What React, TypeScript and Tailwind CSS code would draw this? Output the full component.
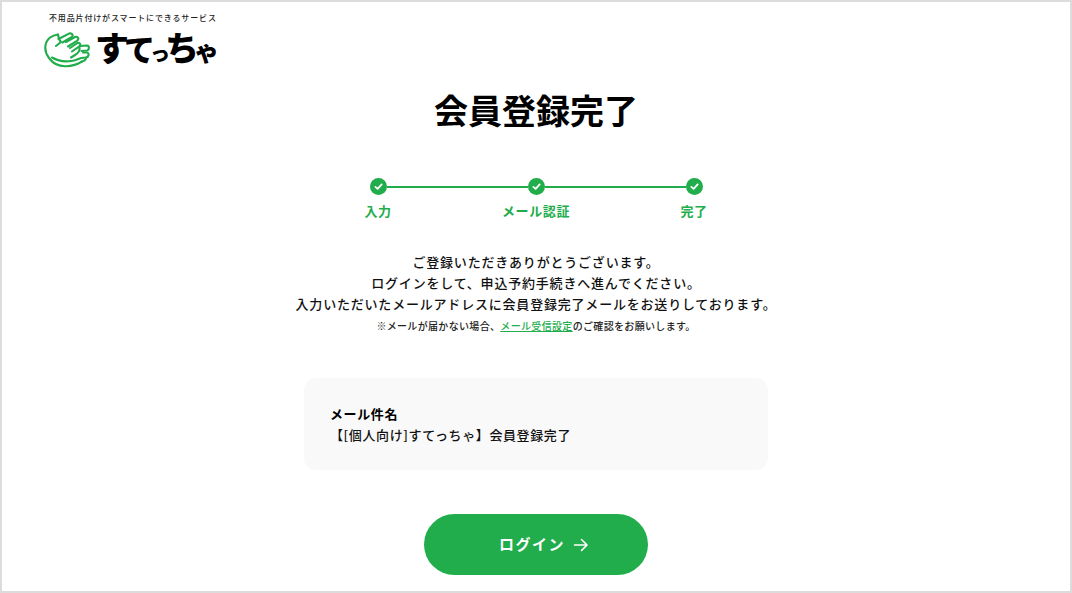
import React from "react";

const font = { fontFamily: '"Noto Sans CJK JP", "Noto Sans", sans-serif' };

function Check() {
  return (
    <span className="w-[17px] h-[17px] rounded-full bg-[#21ad4b] flex items-center justify-center shrink-0">
      <svg width="9" height="9" viewBox="0 0 10 10" fill="none" stroke="#fff" strokeWidth="2" strokeLinecap="round" strokeLinejoin="round">
        <path d="M1.5 5.4 L4 7.6 L8.5 2.6" />
      </svg>
    </span>
  );
}

function Hand() {
  return (
    <svg width="46" height="36" viewBox="0 0 46 36" fill="none" stroke="#21ad4b" strokeWidth="2.1" strokeLinecap="round" strokeLinejoin="round" className="shrink-0">
      <path d="M14 2.5 C8 3.5 3.5 6.5 2 11 C0.5 16 2 22 5 26 C9 31.5 15 34.5 22 34.2 C28 34 34 32 38 29.5" />
      <path d="M14 2.5 C14.5 5.5 15 8 17 10 L12 14" />
      <path d="M14.5 7 L25 1.6 C28 0.6 30 3.5 27.5 5.2 L18.5 10.5" />
      <path d="M22 10 L31 5 C34 4 35.5 7 33 8.8 L24 14.5" />
      <path d="M26 16 L33.5 11 C36 10 37.5 13 35 14.6 L28 19.5" />
      <path d="M36 14 L43 13.5 C45.5 13.5 45.5 18 43 18.5 L37.5 19" />
      <path d="M35.5 15.5 C36 18.5 34.5 21 31 23 L27 25.5" />
      <path d="M39 20.5 L43 20.5 C45.5 21 45 25 42 25.5 L37 26 C34 27 31 29 27 29" />
      <path d="M42 25.5 C42 28 40 29 38 29.5" />
      <path d="M8 25.5 C14 29 20 30 27 29" />
    </svg>
  );
}

export default function App() {
  return (
    <div style={font} className="w-[1072px] h-[593px] border-2 border-[#dcdcdc] bg-white text-black overflow-hidden flex flex-col">
      <header className="pl-[42px] pt-[11px] flex flex-col items-start h-[83px] shrink-0">
        <div className="pl-[5px] text-[8px] leading-[10px] font-medium tracking-[0.85px] text-[#222] whitespace-nowrap">
          不用品片付けがスマートにできるサービス
        </div>
        <div className="flex items-center gap-[5px] mt-[5px]">
          <Hand />
          <span className="font-black leading-[38px] whitespace-nowrap text-[34px] tracking-[-5px]">
            す<span className="text-[31px]">て</span>
            <span className="text-[20px]">っ</span>ち<span className="text-[25px]">ゃ</span>
          </span>
        </div>
      </header>

      <h1 className="text-center text-[34px] leading-[50px] font-bold shrink-0">会員登録完了</h1>

      <div className="self-center w-[396px] mt-[43px] flex flex-col shrink-0">
        <div className="mx-[31.5px] flex items-center">
          <Check />
          <span className="flex-1 h-[2px] bg-[#21ad4b]" />
          <Check />
          <span className="flex-1 h-[2px] bg-[#21ad4b]" />
          <Check />
        </div>
        <div className="flex justify-between mt-[6px] text-[13px] leading-[20px] font-bold text-[#21ad4b] tracking-[0.6px]">
          <span className="w-[80px] text-center">入力</span>
          <span className="w-[80px] text-center">メール認証</span>
          <span className="w-[80px] text-center">完了</span>
        </div>
      </div>

      <div className="mt-[30px] text-center text-[13px] leading-[21px] tracking-[0.8px] font-medium text-[#111] shrink-0">
        <p>ご登録いただきありがとうございます。</p>
        <p>ログインをして、申込予約手続きへ進んでください。</p>
        <p>入力いただいたメールアドレスに会員登録完了メールをお送りしております。</p>
      </div>
      <p className="mt-[4px] text-center text-[10px] leading-[16px] tracking-[0.33px] font-medium text-[#222] shrink-0">
        ※メールが届かない場合、<span className="text-[#21ad4b] underline">メール受信設定</span>のご確認をお願いします。
      </p>

      <div className="self-center w-[464px] h-[92px] mt-[44px] rounded-[12px] bg-[#f9f9f9] pl-[26px] pt-[25px] text-[13px] leading-[21px] tracking-[0.6px] shrink-0">
        <p className="font-bold">メール件名</p>
        <p className="font-medium text-[#111]">【[個人向け]すてっちゃ】会員登録完了</p>
      </div>

      <button className="self-center w-[224px] h-[61px] mt-[44px] pl-[16px] shrink-0 rounded-full bg-[#21ad4b] text-white font-bold text-[15px] tracking-[1.5px] flex items-center justify-center gap-[8px]">
        <span>ログイン</span>
        <svg width="16" height="14" viewBox="0 0 16 14" fill="none" stroke="#fff" strokeWidth="1.6" strokeLinecap="round" strokeLinejoin="round">
          <path d="M1.5 7 H14 M8.5 1.5 L14 7 L8.5 12.5" />
        </svg>
      </button>
    </div>
  );
}
